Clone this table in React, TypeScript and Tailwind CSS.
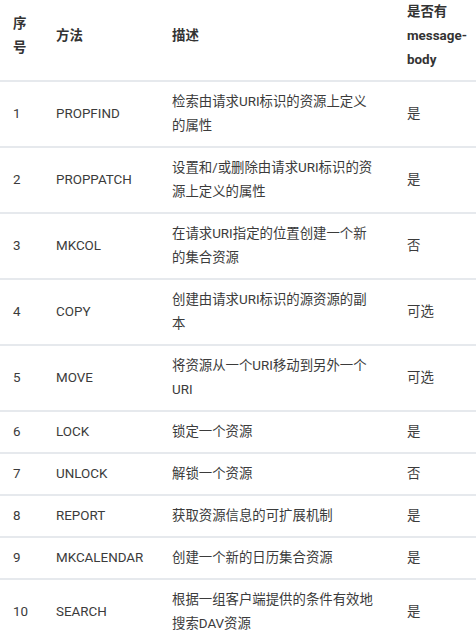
import React from 'react'

type Method = { id: number; name: string; desc: string; body: string }

const methods: Method[] = [
  { id: 1, name: 'PROPFIND', desc: '检索由请求URI标识的资源上定义的属性', body: '是' },
  { id: 2, name: 'PROPPATCH', desc: '设置和/或删除由请求URI标识的资源上定义的属性', body: '是' },
  { id: 3, name: 'MKCOL', desc: '在请求URI指定的位置创建一个新的集合资源', body: '否' },
  { id: 4, name: 'COPY', desc: '创建由请求URI标识的源资源的副本', body: '可选' },
  { id: 5, name: 'MOVE', desc: '将资源从一个URI移动到另外一个URI', body: '可选' },
  { id: 6, name: 'LOCK', desc: '锁定一个资源', body: '是' },
  { id: 7, name: 'UNLOCK', desc: '解锁一个资源', body: '否' },
  { id: 8, name: 'REPORT', desc: '获取资源信息的可扩展机制', body: '是' },
  { id: 9, name: 'MKCALENDAR', desc: '创建一个新的日历集合资源', body: '是' },
  { id: 10, name: 'SEARCH', desc: '根据一组客户端提供的条件有效地搜索DAV资源', body: '是' },
]

export default function App() {
  return (
    <div className="w-[476px] h-[633px] overflow-hidden bg-white font-['Roboto','Noto_Sans_CJK_SC',sans-serif] text-[13.4px] leading-6">
      <table className="w-[476px] table-fixed border-collapse">
        <colgroup>
          <col className="w-[56px]" />
          <col className="w-[116px]" />
          <col className="w-[235px]" />
          <col className="w-[69px]" />
        </colgroup>
        <thead>
          <tr className="border-b-2 border-[#e6e9ed] text-[#333] font-bold text-left">
            <th className="pl-[13px] pr-[20px] pb-2 align-middle">序号</th>
            <th className="pb-2 align-middle">方法</th>
            <th className="pr-[30px] pb-2 align-middle">描述</th>
            <th className="pb-2 align-middle">是否有message-body</th>
          </tr>
        </thead>
        <tbody className="text-[#3b3b3b]">
          {methods.map((m) => (
            <tr key={m.id} className="border-b-2 border-[#e6e9ed]">
              <td className="pl-[13px] pr-[20px] py-2 align-middle">{m.id}</td>
              <td className="py-2 align-middle">{m.name}</td>
              <td className="pr-[30px] py-2 align-middle">{m.desc}</td>
              <td className="py-2 align-middle">{m.body}</td>
            </tr>
          ))}
        </tbody>
      </table>
    </div>
  )
}
